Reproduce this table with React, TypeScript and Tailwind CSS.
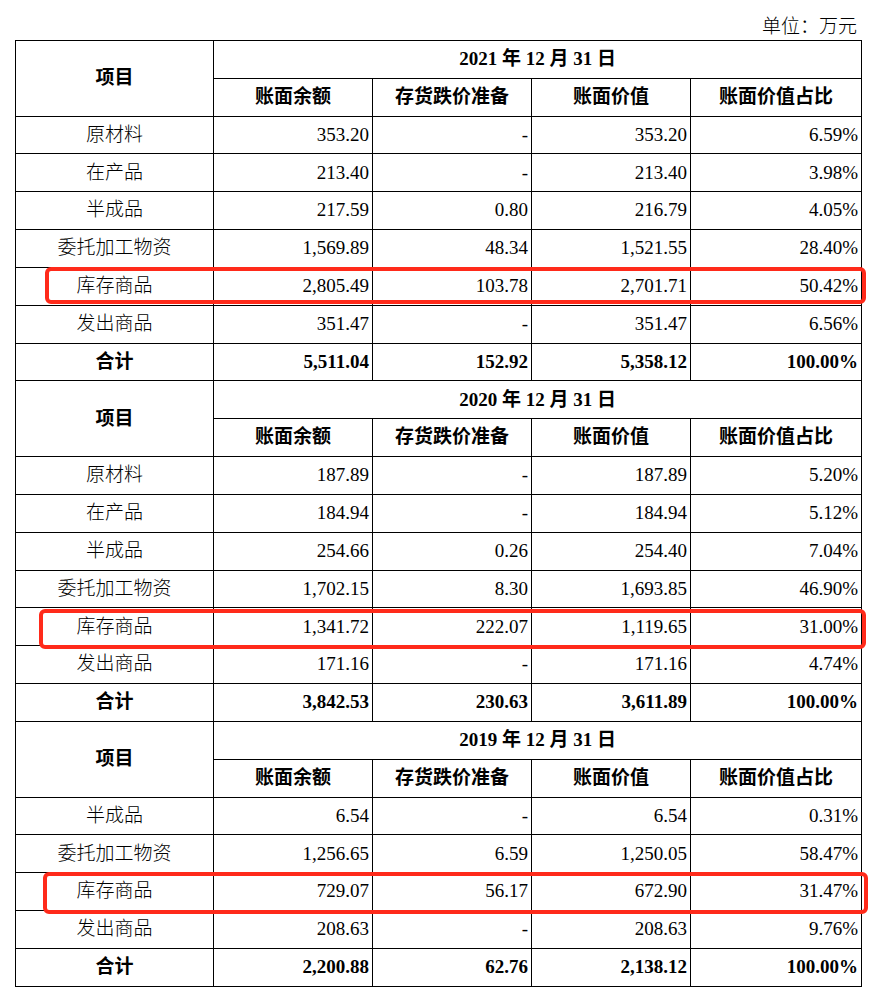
import React from "react";

type Row = [string, string, string, string, string];

const sections: { title: string; rows: Row[]; total: Row }[] = [
  {
    title: "2021 年 12 月 31 日",
    rows: [
      ["原材料", "353.20", "-", "353.20", "6.59%"],
      ["在产品", "213.40", "-", "213.40", "3.98%"],
      ["半成品", "217.59", "0.80", "216.79", "4.05%"],
      ["委托加工物资", "1,569.89", "48.34", "1,521.55", "28.40%"],
      ["库存商品", "2,805.49", "103.78", "2,701.71", "50.42%"],
      ["发出商品", "351.47", "-", "351.47", "6.56%"],
    ],
    total: ["合计", "5,511.04", "152.92", "5,358.12", "100.00%"],
  },
  {
    title: "2020 年 12 月 31 日",
    rows: [
      ["原材料", "187.89", "-", "187.89", "5.20%"],
      ["在产品", "184.94", "-", "184.94", "5.12%"],
      ["半成品", "254.66", "0.26", "254.40", "7.04%"],
      ["委托加工物资", "1,702.15", "8.30", "1,693.85", "46.90%"],
      ["库存商品", "1,341.72", "222.07", "1,119.65", "31.00%"],
      ["发出商品", "171.16", "-", "171.16", "4.74%"],
    ],
    total: ["合计", "3,842.53", "230.63", "3,611.89", "100.00%"],
  },
  {
    title: "2019 年 12 月 31 日",
    rows: [
      ["半成品", "6.54", "-", "6.54", "0.31%"],
      ["委托加工物资", "1,256.65", "6.59", "1,250.05", "58.47%"],
      ["库存商品", "729.07", "56.17", "672.90", "31.47%"],
      ["发出商品", "208.63", "-", "208.63", "9.76%"],
    ],
    total: ["合计", "2,200.88", "62.76", "2,138.12", "100.00%"],
  },
];

const headers = ["账面余额", "存货跌价准备", "账面价值", "账面价值占比"];

const cell = "border border-black p-0";
const num = "border border-black p-0 pr-[3px] text-right";

export default function App() {
  return (
    <div
      className="relative w-[877px] h-[993px] bg-white text-black text-[19px]"
      style={{ fontFamily: '"Liberation Serif", "Noto Sans CJK SC", serif' }}
    >
      <div className="h-[40px] pt-[14px] pr-[20px] text-right leading-[26px] font-light">
        单位：万元
      </div>
      <table className="ml-[15px] w-[846px] border-collapse table-fixed">
        <colgroup>
          <col className="w-[198px]" />
          <col className="w-[159px]" />
          <col className="w-[159px]" />
          <col className="w-[159px]" />
          <col className="w-[171px]" />
        </colgroup>
        <tbody>
          {sections.map((s) => (
            <React.Fragment key={s.title}>
              <tr className="h-[37.84px]">
                <td rowSpan={2} className={`${cell} text-center font-bold`}>
                  项目
                </td>
                <td colSpan={4} className={`${cell} text-center font-bold`}>
                  {s.title}
                </td>
              </tr>
              <tr className="h-[37.84px]">
                {headers.map((h) => (
                  <td key={h} className={`${cell} text-center font-bold`}>
                    {h}
                  </td>
                ))}
              </tr>
              {s.rows.map((r) => (
                <tr key={r[0]} className="h-[37.84px]">
                  <td className={`${cell} text-center font-light`}>{r[0]}</td>
                  <td className={num}>{r[1]}</td>
                  <td className={num}>{r[2]}</td>
                  <td className={num}>{r[3]}</td>
                  <td className={`${num} pr-[2px]`}>{r[4]}</td>
                </tr>
              ))}
              <tr className="h-[37.84px] font-bold">
                <td className={`${cell} text-center`}>{s.total[0]}</td>
                <td className={num}>{s.total[1]}</td>
                <td className={num}>{s.total[2]}</td>
                <td className={num}>{s.total[3]}</td>
                <td className={`${num} pr-[2px]`}>{s.total[4]}</td>
              </tr>
            </React.Fragment>
          ))}
        </tbody>
      </table>
      <div className="absolute left-[45px] top-[267px] w-[821px] h-[37px] border-4 border-[#ff2a1a] rounded-[6px]" />
      <div className="absolute left-[39px] top-[609px] w-[827px] h-[40px] border-4 border-[#ff2a1a] rounded-[6px]" />
      <div className="absolute left-[43px] top-[872px] w-[825px] h-[42px] border-4 border-[#ff2a1a] rounded-[6px]" />
    </div>
  );
}
